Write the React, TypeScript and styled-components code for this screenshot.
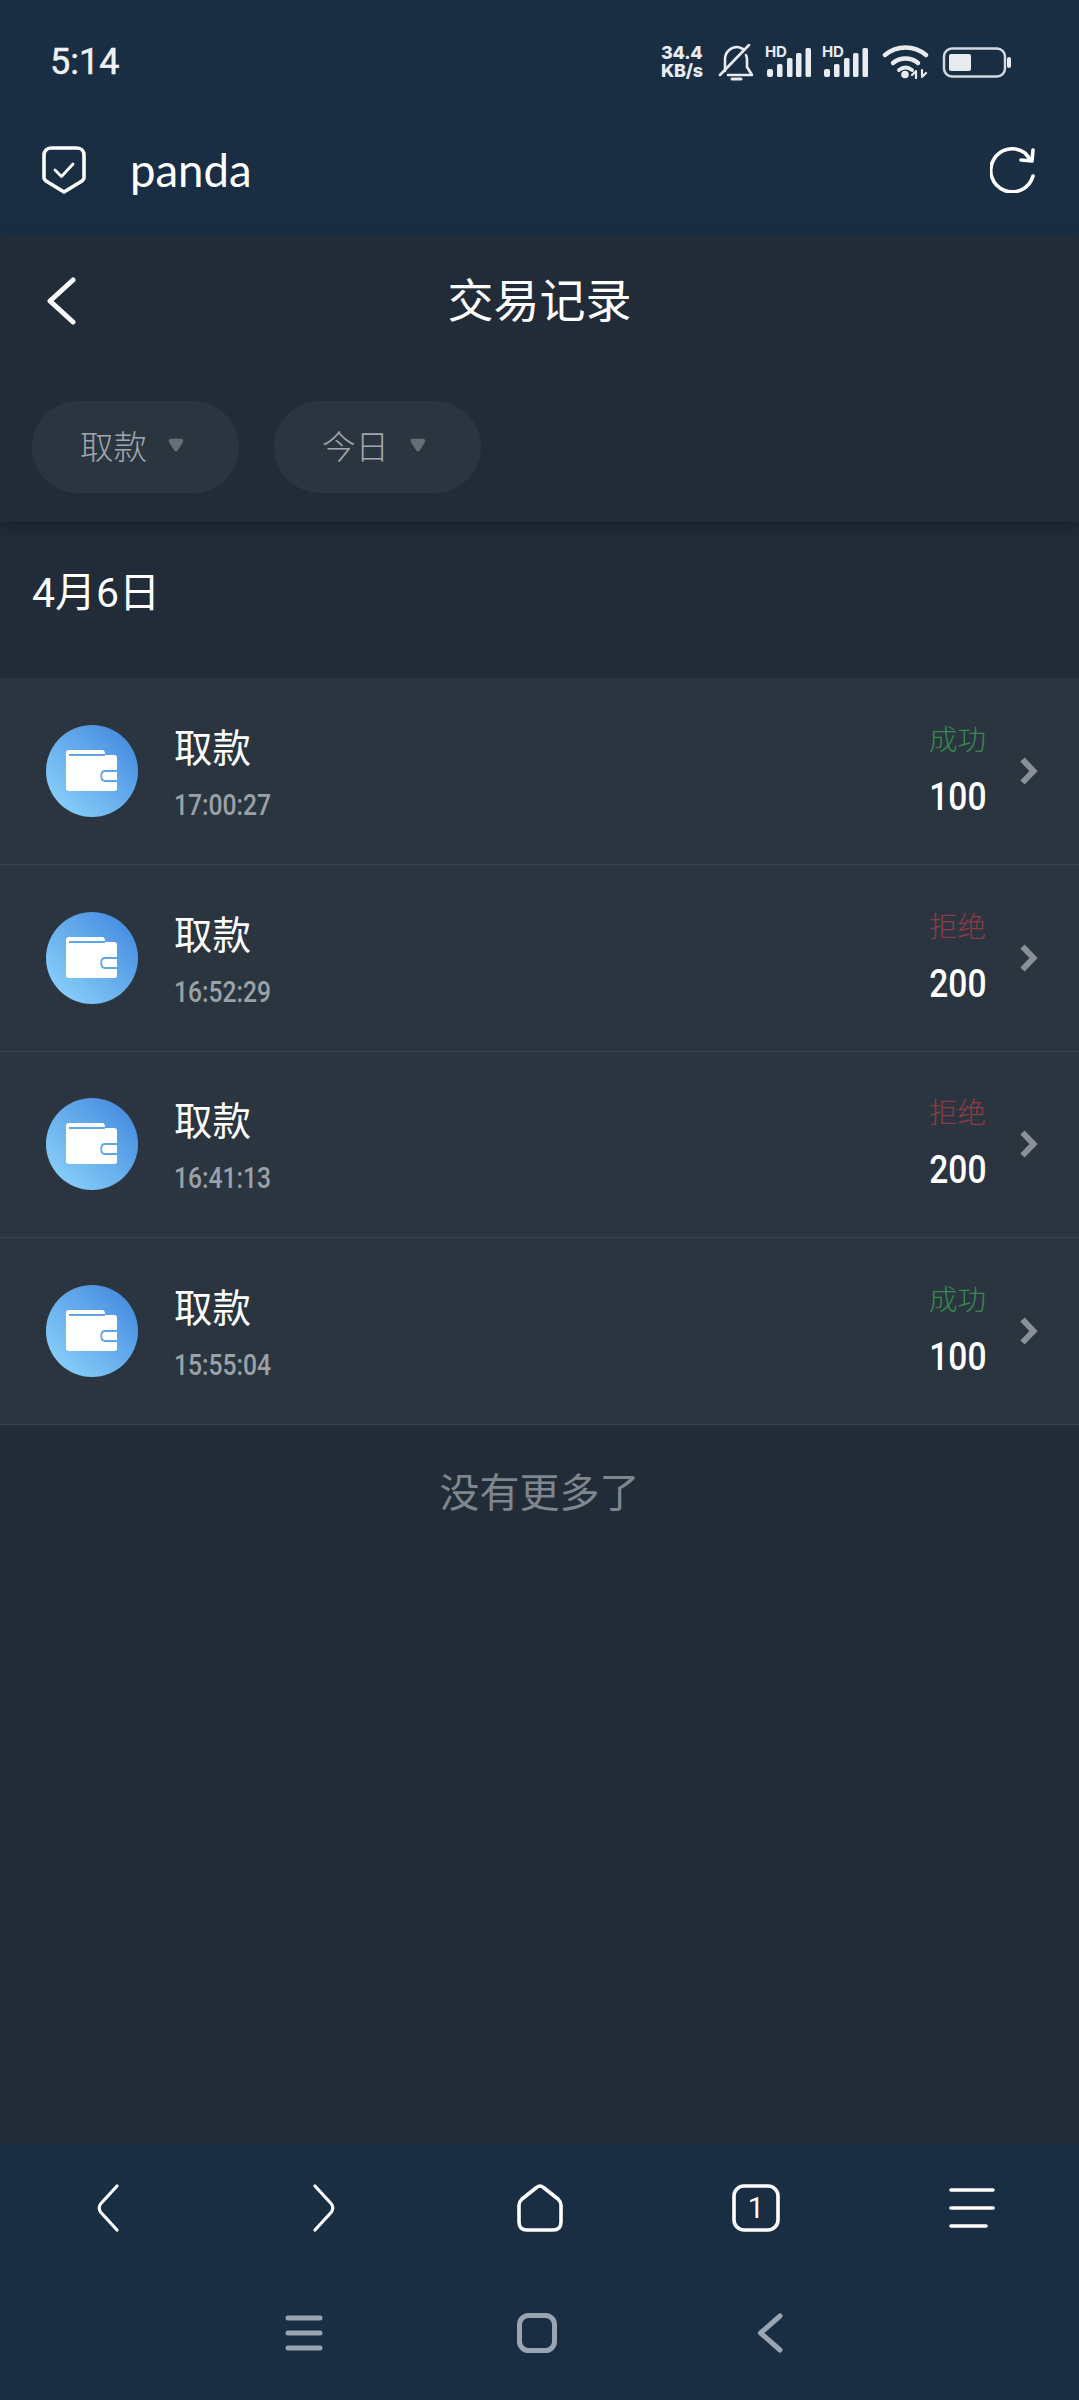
import React from "react"
import styled, { createGlobalStyle } from "styled-components"

const GlobalStyle = createGlobalStyle`
  html, body {
    margin: 0;
    padding: 0;
    background: #212c38;
  }
  * {
    box-sizing: border-box;
  }
`

const Page = styled.div`
  width: 1079px;
  height: 2400px;
  display: flex;
  flex-direction: column;
  overflow: hidden;
  background: #212c38;
  color: #fff;
  font-family: Roboto, "Noto Sans CJK SC", sans-serif;
`

const TopArea = styled.div`
  background: #192d43;
`

const StatusBar = styled.div`
  height: 124px;
  padding: 0 67px 0 50px;
  display: flex;
  align-items: center;
  justify-content: space-between;
`

const Clock = styled.div`
  font-size: 36px;
  font-weight: 400;
  color: #eef1f4;
  -webkit-text-stroke: 0.5px #eef1f4;
`

const StatusIcons = styled.div`
  display: flex;
  align-items: center;
  gap: 11px;
  color: #e8ecf0;
`

const Speed = styled.div`
  width: 46px;
  font-family: Inter, sans-serif;
  font-size: 18px;
  line-height: 18px;
  font-weight: 800;
  text-align: left;
  white-space: nowrap;
  letter-spacing: -0.2px;
`

const SignalSvg = styled.svg`
  margin-top: -4px;
`

const BrowserBar = styled.div`
  height: 110px;
  padding: 0 43px 18px 42px;
  display: flex;
  align-items: center;
  color: #fff;
`

const SiteName = styled.div`
  margin-left: 44px;
  flex: 1;
  font-family: Lato, sans-serif;
  font-size: 45.5px;
  line-height: 60px;
`

const Header = styled.header`
  position: relative;
  z-index: 1;
  height: 288px;
  padding-top: 37px;
  background: #212c38;
  box-shadow: 0 5px 14px rgba(0, 0, 0, 0.26);
`

const TitleRow = styled.div`
  height: 60px;
  padding: 0 46px;
  display: grid;
  grid-template-columns: 1fr auto 1fr;
  align-items: center;
`

const Title = styled.h1`
  margin: 0;
  font-size: 46px;
  line-height: 60px;
  font-weight: 400;
`

const Filters = styled.div`
  margin-top: 70px;
  padding-left: 32px;
  display: flex;
  gap: 35px;
`

const Pill = styled.div`
  width: 207px;
  height: 92px;
  padding: 0 0 5px 48px;
  display: flex;
  align-items: center;
  gap: 21px;
  border-radius: 46px;
  background: #2b3540;
  color: #a2a7ad;
  font-size: 33.5px;
  font-weight: 200;
`

const DateLabel = styled.div`
  height: 156px;
  padding: 47px 32px 0;
  font-size: 41px;
  line-height: 48px;
  font-weight: 400;
`

const Row = styled.div`
  height: 186.75px;
  padding: 0 41px 0 46px;
  display: flex;
  align-items: center;
  background: #2b3540;
  border-bottom: 1px solid #38424d;
`

const Badge = styled.div`
  width: 92px;
  height: 92px;
  flex: none;
  border-radius: 50%;
  background: linear-gradient(45deg, #90d8fd 0%, #4a90e2 85%);
`

const RowText = styled.div`
  margin-left: 36px;
  padding-top: 6px;
  flex: 1;
  display: flex;
  flex-direction: column;
  gap: 14px;
`

const RowTitle = styled.div`
  font-size: 38.5px;
  line-height: 48px;
`

const RowTime = styled.div`
  font-size: 29px;
  line-height: 36px;
  font-weight: 500;
  color: #9ba1a8;
  transform: scaleX(0.85);
  transform-origin: left center;
`

const RowRight = styled.div`
  padding-top: 1px;
  display: flex;
  flex-direction: column;
  gap: 15px;
  text-align: right;
`

const Status = styled.div<{ $ok: boolean }>`
  font-size: 28.5px;
  line-height: 36px;
  font-weight: 200;
  color: ${(p) => (p.$ok ? "#378a50" : "#8c3c44")};
`

const Amount = styled.div`
  font-size: 39px;
  line-height: 46px;
  font-weight: 500;
  transform: scaleX(0.86);
  transform-origin: right center;
`

const Chevron = styled.svg`
  margin-left: 34px;
  flex: none;
`

const NoMore = styled.div`
  padding-top: 41px;
  font-size: 40px;
  line-height: 56px;
  text-align: center;
  color: #7f868e;
`

const Spacer = styled.div`
  flex: 1;
`

const BottomArea = styled.div`
  height: 257px;
  padding-bottom: 7px;
  background: #192d43;
`

const BrowserNav = styled.nav`
  height: 130px;
  display: grid;
  grid-template-columns: repeat(5, 216px);
  align-items: center;
  justify-items: center;
  color: #fff;
`

const SystemNav = styled.nav`
  height: 120px;
  padding: 0 187px;
  display: grid;
  grid-template-columns: repeat(3, 233px);
  align-items: center;
  justify-items: center;
  color: #9aa5b1;
`

const BellIcon = () => (
  <svg width="36" height="37" viewBox="0 0 36 37" fill="none" stroke="currentColor" strokeWidth="2.6" strokeLinecap="round" strokeLinejoin="round">
    <path d="M7 27 V15 C7 8 13 3 19 3 C21 3 23 4 25 5" />
    <path d="M28 11 C29 13 29 14 29 16 V23 L34 31 H10" />
    <path d="M2 31 L31 1" />
    <path d="M14 35 H23" strokeWidth="3" />
  </svg>
)

const SignalIcon = () => (
  <SignalSvg width="46" height="36" viewBox="0 -4 46 36" fill="currentColor">
    <text x="0" y="11" fontFamily="Inter, sans-serif" fontWeight="700" fontSize="15" letterSpacing="-0.3">HD</text>
    <rect x="2" y="23" width="6" height="8" rx="2" />
    <rect x="12" y="18" width="5.5" height="13" rx="1.5" />
    <rect x="22" y="12" width="5.5" height="19" rx="1.5" />
    <rect x="31" y="7" width="5.5" height="24" rx="1.5" />
    <rect x="40.5" y="2" width="5.5" height="29" rx="1.5" />
  </SignalSvg>
)

const WifiIcon = () => (
  <svg width="50" height="34" viewBox="0 0 50 34" fill="none" stroke="currentColor" strokeWidth="4.4" strokeLinecap="round">
    <path d="M6 10 C18 0 35 0 47 10" />
    <path d="M14 18 C21 12 32 12 39 18" />
    <path d="M20 25 C24 22 29 22 33 25" strokeWidth="3.8" />
    <circle cx="26" cy="29.5" r="3.8" fill="currentColor" stroke="none" />
    <path d="M37 33 V26 M36 27 L33 30 M43 25 V32 M44 31 L47 28" strokeWidth="2.2" />
  </svg>
)

const BatteryIcon = () => (
  <svg width="72" height="31" viewBox="0 0 72 31" fill="none">
    <rect x="4" y="1.5" width="61" height="28" rx="8" stroke="currentColor" strokeWidth="2.5" opacity="0.9" />
    <rect x="9" y="7" width="22" height="17" rx="2" fill="currentColor" />
    <rect x="67" y="10" width="4" height="11" rx="2" fill="currentColor" />
  </svg>
)

const ShieldIcon = () => (
  <svg width="44" height="48" viewBox="0 0 44 48" fill="none" stroke="currentColor" strokeLinejoin="round" strokeLinecap="round">
    <path d="M9 2 H35 C39 2 42 5 42 9 V32 C42 33 41 34 40 35 L22 46 L4 35 C3 34 2 33 2 32 V9 C2 5 5 2 9 2 Z" strokeWidth="3.6" />
    <path d="M13 24 L19.5 30.5 L31 18" strokeWidth="2.8" />
  </svg>
)

const RefreshIcon = () => (
  <svg width="46" height="46" viewBox="0 0 46 46" fill="none" stroke="currentColor" strokeWidth="3.6" strokeLinecap="round" strokeLinejoin="round">
    <path d="M43 29 A21.5 21.5 0 1 1 35 6 L40 12" />
    <path d="M43 3 L42 14 L31 13" />
  </svg>
)

const BackArrow = () => (
  <svg width="30" height="48" viewBox="0 0 30 48" fill="none" stroke="currentColor" strokeWidth="5" strokeLinecap="round" strokeLinejoin="round">
    <path d="M27 3 L4 24 L27 45" />
  </svg>
)

const FilterCaret = () => (
  <svg width="16" height="14" viewBox="0 0 16 14" fill="#666e77" stroke="#666e77" strokeWidth="4.5" strokeLinejoin="round">
    <path d="M3 3 H13 L8 11 Z" />
  </svg>
)

const WalletIcon = () => (
  <svg width="92" height="92" viewBox="0 0 92 92">
    <path d="M23 25 H56 C58 25 59 26 59 30 H68 C70 30 71 31 71 33 V64 C71 65 70 66 68 66 H23 C21 66 20 65 20 63 V28 C20 26 21 25 23 25 Z" fill="#fff" />
    <path d="M23 30 H59" stroke="#5ea6ea" strokeWidth="1.8" fill="none" />
    <path d="M71 46 H59 C54 46 54 56 59 56 H71" fill="#fff" stroke="#5ea6ea" strokeWidth="1.8" />
  </svg>
)

const RowChevron = () => (
  <Chevron width="18" height="28" viewBox="0 0 18 28" fill="none" stroke="#8a9099" strokeWidth="6" strokeLinejoin="miter">
    <path d="M2.5 2.5 L13.5 14 L2.5 25.5" />
  </Chevron>
)

const NavBack = () => (
  <svg width="22" height="48" viewBox="0 0 22 48" fill="none" stroke="currentColor" strokeWidth="3.2" strokeLinecap="round" strokeLinejoin="round">
    <path d="M20 2 L3.5 20 Q1 24 3.5 28 L20 46" />
  </svg>
)

const NavForward = () => (
  <svg width="22" height="48" viewBox="0 0 22 48" fill="none" stroke="currentColor" strokeWidth="3.2" strokeLinecap="round" strokeLinejoin="round">
    <path d="M2 2 L18.5 20 Q21 24 18.5 28 L2 46" />
  </svg>
)

const NavHome = () => (
  <svg width="48" height="48" viewBox="0 0 48 48" fill="none" stroke="currentColor" strokeWidth="3.6" strokeLinejoin="round">
    <path d="M20.5 3.5 Q24 0.5 27.5 3.5 L42 15 Q45 18 45 21 V38 Q45 46 37 46 H11 Q3 46 3 38 V21 Q3 18 6 15 Z" />
  </svg>
)

const NavTabs = () => (
  <svg width="48" height="48" viewBox="0 0 48 48" fill="none" stroke="currentColor">
    <rect x="2" y="2" width="44" height="44" rx="10" strokeWidth="3.6" />
    <text x="24" y="34" textAnchor="middle" fill="currentColor" stroke="none" fontFamily="Roboto, sans-serif" fontSize="29">1</text>
  </svg>
)

const NavMenu = () => (
  <svg width="46" height="42" viewBox="0 0 46 42" fill="none" stroke="currentColor" strokeWidth="3.6" strokeLinecap="round">
    <path d="M2 3 H44 M2 21 H44 M2 39 H37" />
  </svg>
)

const SysMenu = () => (
  <svg width="38" height="36" viewBox="0 0 38 36" fill="none" stroke="currentColor" strokeWidth="5" strokeLinecap="round">
    <path d="M3 3 H35 M3 18 H35 M3 33 H35" />
  </svg>
)

const SysHome = () => (
  <svg width="40" height="40" viewBox="0 0 40 40" fill="none" stroke="currentColor" strokeWidth="5">
    <rect x="2.5" y="2.5" width="35" height="35" rx="9" />
  </svg>
)

const SysBack = () => (
  <svg width="26" height="40" viewBox="0 0 26 40" fill="none" stroke="currentColor" strokeWidth="5" strokeLinecap="round" strokeLinejoin="round">
    <path d="M23 3 L3.5 20 L23 37" />
  </svg>
)

const records = [
  { time: "17:00:27", ok: true, amount: "100" },
  { time: "16:52:29", ok: false, amount: "200" },
  { time: "16:41:13", ok: false, amount: "200" },
  { time: "15:55:04", ok: true, amount: "100" },
]

export default function App() {
  return (
    <Page>
      <GlobalStyle />
      <TopArea>
        <StatusBar>
          <Clock>5:14</Clock>
          <StatusIcons>
            <Speed>
              34.4
              <br />
              KB/s
            </Speed>
            <BellIcon />
            <SignalIcon />
            <SignalIcon />
            <WifiIcon />
            <BatteryIcon />
          </StatusIcons>
        </StatusBar>
        <BrowserBar>
          <ShieldIcon />
          <SiteName>panda</SiteName>
          <RefreshIcon />
        </BrowserBar>
      </TopArea>
      <Header>
        <TitleRow>
          <BackArrow />
          <Title>交易记录</Title>
        </TitleRow>
        <Filters>
          <Pill>
            取款
            <FilterCaret />
          </Pill>
          <Pill>
            今日
            <FilterCaret />
          </Pill>
        </Filters>
      </Header>
      <DateLabel>4月6日</DateLabel>
      {records.map((r) => (
        <Row key={r.time}>
          <Badge>
            <WalletIcon />
          </Badge>
          <RowText>
            <RowTitle>取款</RowTitle>
            <RowTime>{r.time}</RowTime>
          </RowText>
          <RowRight>
            <Status $ok={r.ok}>{r.ok ? "成功" : "拒绝"}</Status>
            <Amount>{r.amount}</Amount>
          </RowRight>
          <RowChevron />
        </Row>
      ))}
      <NoMore>没有更多了</NoMore>
      <Spacer />
      <BottomArea>
        <BrowserNav>
          <NavBack />
          <NavForward />
          <NavHome />
          <NavTabs />
          <NavMenu />
        </BrowserNav>
        <SystemNav>
          <SysMenu />
          <SysHome />
          <SysBack />
        </SystemNav>
      </BottomArea>
    </Page>
  )
}
